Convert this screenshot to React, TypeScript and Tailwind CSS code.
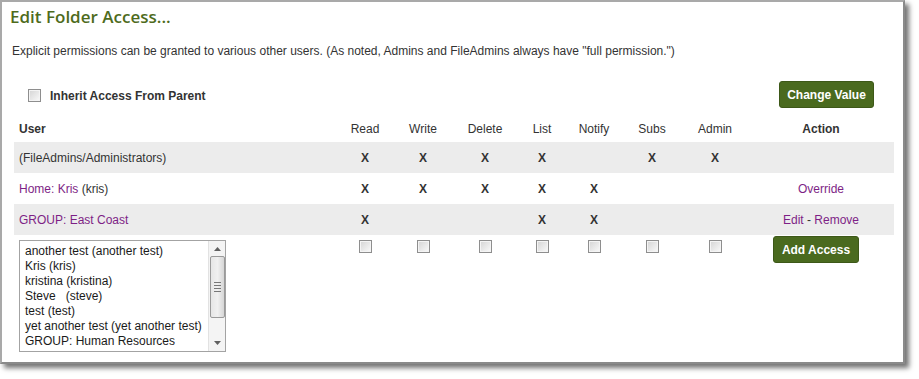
const cols = ['Read', 'Write', 'Delete', 'List', 'Notify', 'Subs', 'Admin']

const rows = [
  { user: <span>(FileAdmins/Administrators)</span>, perms: [1, 1, 1, 1, 0, 1, 1], action: null, gray: true },
  {
    user: (
      <span>
        <span className="text-[#7e1f86]">Home: Kris</span> (kris)
      </span>
    ),
    perms: [1, 1, 1, 1, 1, 0, 0],
    action: <span className="text-[#7e1f86]">Override</span>,
    gray: false,
  },
  {
    user: <span className="text-[#7e1f86]">GROUP: East Coast</span>,
    perms: [1, 0, 0, 1, 1, 0, 0],
    action: (
      <span>
        <span className="text-[#7e1f86]">Edit</span> - <span className="text-[#7e1f86]">Remove</span>
      </span>
    ),
    gray: true,
  },
]

const users = [
  'another test (another test)',
  'Kris (kris)',
  'kristina (kristina)',
  'Steve   (steve)',
  'test (test)',
  'yet another test (yet another test)',
  'GROUP: Human Resources',
]

const grid = 'grid grid-cols-[322px_58px_58px_66px_48px_56px_60px_66px_146px] w-[880px]'

function Box() {
  return (
    <span className="block w-[13px] h-[13px] border border-[#8e8e8e] bg-gradient-to-br from-[#d4d4d4] to-[#fafafa] shadow-[inset_0_0_0_1px_#f4f4f4]" />
  )
}

function GreenButton({ label, className }: { label: string; className?: string }) {
  return (
    <button
      className={`h-[27px] rounded-[3px] bg-[#4a6a1f] border border-[#3d5818] text-white font-bold text-[12px] ${className ?? ''}`}
    >
      {label}
    </button>
  )
}

export default function App() {
  return (
    <div className="w-[919px] h-[379px] bg-white font-['Liberation_Sans',Arial,sans-serif] text-[12px] text-[#333]">
      <div className="w-[905px] h-[364px] bg-white border-2 border-[#a9a9a9] border-r-[#8a8a8a] border-b-[#8a8a8a] shadow-[4px_4px_5px_rgba(0,0,0,0.55)]">
        {/* title */}
        <div className="pl-[8px] pt-[4px] h-[26px] font-['Open_Sans',sans-serif] font-semibold text-[17px] leading-[22px] text-[#4e6b1c]">
          Edit Folder Access...
        </div>
        <div className="pl-[10px] mt-[16px] leading-[14px]">
          Explicit permissions can be granted to various other users. (As noted, Admins and FileAdmins always have "full
          permission.")
        </div>

        {/* inherit row */}
        <div className="ml-[12px] w-[880px] mt-[23px] pl-[14px] pr-[20px] flex items-center justify-between">
          <div className="flex items-center gap-[9px] mt-[2px]">
            <Box />
            <span className="font-bold">Inherit Access From Parent</span>
          </div>
          <GreenButton label="Change Value" className="w-[95px]" />
        </div>

        {/* table */}
        <div className="ml-[12px] mt-[7px]">
          <div className={`${grid} h-[27px] items-center`}>
            <div className="pl-[5px] font-bold">User</div>
            {cols.map((c) => (
              <div key={c} className="text-center">
                {c}
              </div>
            ))}
            <div className="text-center font-bold">Action</div>
          </div>
          {rows.map((r, i) => (
            <div key={i} className={`${grid} h-[31px] items-center ${r.gray ? 'bg-[#ececec]' : ''}`}>
              <div className="pl-[5px]">{r.user}</div>
              {r.perms.map((p, j) => (
                <div key={j} className="text-center font-bold">
                  {p ? 'X' : ''}
                </div>
              ))}
              <div className="text-center">{r.action}</div>
            </div>
          ))}

          {/* add row */}
          <div className={`${grid} items-start`}>
            <div className="pl-[5px] pt-[5px]">
              <div className="w-[207px] h-[112px] border border-[#a3a3a3] flex bg-white">
                <div className="flex-1 pl-[5px] pt-[3px] text-[#1a1a1a] leading-[15px] whitespace-pre">
                  {users.map((u) => (
                    <div key={u}>{u}</div>
                  ))}
                </div>
                <div className="w-[17px] flex flex-col items-center bg-[#f4f4f4] border-l border-[#e2e2e2]">
                  <svg width="7" height="4" viewBox="0 0 7 4" className="mt-[6px]">
                    <path d="M0 4 L3.5 0 L7 4 Z" fill="#606060" />
                  </svg>
                  <div className="mt-[5px] w-[15px] h-[62px] rounded-[2px] border border-[#9a9a9a] bg-gradient-to-r from-[#e6e6e6] via-[#f0f0f0] to-[#d6d6d6] flex flex-col items-center justify-center gap-[2px]">
                    <span className="block w-[7px] h-px bg-[#777]" />
                    <span className="block w-[7px] h-px bg-[#777]" />
                    <span className="block w-[7px] h-px bg-[#777]" />
                    <span className="block w-[7px] h-px bg-[#777]" />
                  </div>
                  <svg width="7" height="4" viewBox="0 0 7 4" className="mt-auto mb-[6px]">
                    <path d="M0 0 L3.5 4 L7 0 Z" fill="#606060" />
                  </svg>
                </div>
              </div>
            </div>
            {cols.map((c) => (
              <div key={c} className="flex justify-center pt-[5px]">
                <Box />
              </div>
            ))}
            <div className="pt-[1px] pl-[25px]">
              <GreenButton label="Add Access" className="w-[86px]" />
            </div>
          </div>
        </div>
      </div>
    </div>
  )
}
